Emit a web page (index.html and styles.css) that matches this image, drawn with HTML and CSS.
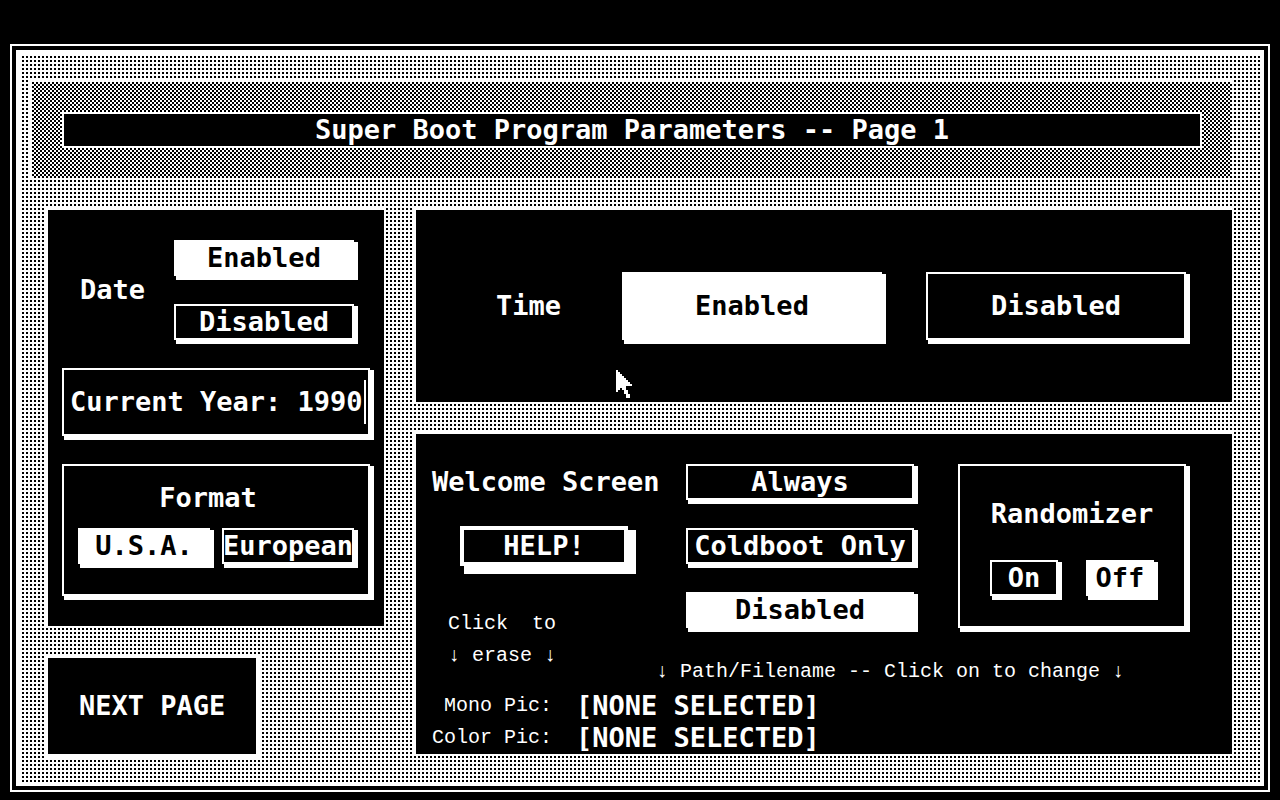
FILE: index.html
```html
<!DOCTYPE html>
<html lang="en">
<head>
<meta charset="utf-8">
<title>Super Boot Program Parameters</title>
<meta name="viewport" content="width=device-width, initial-scale=1">
<link rel="stylesheet" href="styles.css">
</head>
<body>
<main class="window">
  <form class="desk">
    <header class="banner">
      <h1 class="banner-title">Super Boot Program Parameters -- Page 1</h1>
    </header>
    <div class="columns">
      <div class="column">
        <section class="panel date-panel">
          <div class="date-row" role="radiogroup" aria-labelledby="date-label">
            <span class="date-label" id="date-label">Date</span>
            <div class="stack">
              <label class="box option"><input type="radio" name="date" checked><span>Enabled</span></label>
              <label class="box option"><input type="radio" name="date"><span>Disabled</span></label>
            </div>
          </div>
          <div class="box year-box">
            <label for="year">Current Year:&nbsp;</label>
            <input class="year-input" id="year" type="text" value="1990" maxlength="4">
            <span class="caret"></span>
          </div>
          <div class="box format-box" role="radiogroup" aria-labelledby="format-label">
            <span class="format-label" id="format-label">Format</span>
            <div class="format-row">
              <label class="box option"><input type="radio" name="format" checked><span>U.S.A.</span></label>
              <label class="box option"><input type="radio" name="format"><span>European</span></label>
            </div>
          </div>
        </section>
        <button class="next" type="button">NEXT PAGE</button>
      </div>
      <div class="column">
        <section class="panel time-panel" role="radiogroup" aria-labelledby="time-label">
          <span class="time-label" id="time-label">Time</span>
          <div class="time-row">
            <label class="box option tall"><input type="radio" name="time" checked><span>Enabled</span></label>
            <label class="box option tall"><input type="radio" name="time"><span>Disabled</span></label>
          </div>
          <svg class="pointer" viewBox="0 0 8 14" width="16" height="28" shape-rendering="crispEdges" aria-hidden="true"><path fill="#fff" d="M0 0h1v1h1v1h1v1h1v1h1v1h1v1h1v1h1v1H5v2h1v2h1v2H5v-2H4v-2H3V9H2v1H1v1H0z"/></svg>
        </section>
        <section class="panel welcome-panel">
          <div class="welcome-top">
            <div class="welcome-side">
              <span class="welcome-label" id="welcome-label">Welcome Screen</span>
              <button class="help" type="button">HELP!</button>
              <p class="small erase">Click&nbsp; to<br>↓ erase ↓</p>
            </div>
            <div class="welcome-main">
              <div class="welcome-options">
                <div class="stack" role="radiogroup" aria-labelledby="welcome-label">
                  <label class="box option"><input type="radio" name="welcome"><span>Always</span></label>
                  <label class="box option"><input type="radio" name="welcome"><span>Coldboot Only</span></label>
                  <label class="box option"><input type="radio" name="welcome" checked><span>Disabled</span></label>
                </div>
                <div class="box random-box" role="radiogroup" aria-labelledby="random-label">
                  <span id="random-label">Randomizer</span>
                  <div class="random-row">
                    <label class="box option"><input type="radio" name="random"><span>On</span></label>
                    <label class="box option"><input type="radio" name="random" checked><span>Off</span></label>
                  </div>
                </div>
              </div>
              <p class="small">↓ Path/Filename -- Click on to change ↓</p>
            </div>
          </div>
          <table class="files">
            <tr><th class="small" scope="row">Mono Pic:</th><td><button class="file" type="button">[NONE SELECTED]</button></td></tr>
            <tr><th class="small" scope="row">Color Pic:</th><td><button class="file" type="button">[NONE SELECTED]</button></td></tr>
          </table>
        </section>
      </div>
    </div>
  </form>
</main>
</body>
</html>
```
FILE: styles.css
```css
* {
  box-sizing: border-box;
}

body {
  margin: 0;
  min-height: 100vh;
  padding: 44px 10px 8px;
  background: #000;
  color: #fff;
  font: bold 27px/32px "DejaVu Sans Mono", monospace;
}

button,
input {
  margin: 0;
  padding: 0;
  border: 0;
  background: none;
  color: inherit;
  font: inherit;
}

p,
h1 {
  margin: 0;
  font: inherit;
}

.window {
  padding: 4px;
  border: 2px solid #fff;
}

/* 4px tile with one 2px black dot in its lower right corner */
.desk {
  padding: 28px;
  border: 4px solid #fff;
  background: conic-gradient(#fff 25%, #000 0 50%, #fff 0) padding-box 0 0 / 4px 4px;
}

/* 2px checkerboard */
.banner {
  margin: 0 0 32px -16px;
  padding: 30px;
  outline: 2px solid #fff;
  background: conic-gradient(#fff 25%, #000 0 50%, #fff 0 75%, #000 0) 0 0 / 4px 4px;
}

.banner-title {
  border: 2px solid #fff;
  background: #000;
  text-align: center;
  white-space: nowrap;
}

.columns {
  display: grid;
  grid-template-columns: 7fr 17fr;
  gap: 32px;
}

.column {
  display: flex;
  flex-direction: column;
  gap: 32px;
  min-width: 0;
}

.panel {
  position: relative;
  background: #000;
  outline: 2px solid #fff;
}

.box {
  border: 2px solid #fff;
  box-shadow: 4px 2px #fff, 2px 4px #fff, 4px 4px #fff;
  background: #000;
  white-space: nowrap;
}

.option {
  position: relative;
  display: flex;
  flex: 1 1 0;
  align-items: center;
  justify-content: center;
  min-width: 0;
}

.option input {
  position: absolute;
  inset: 0;
  appearance: none;
}

.option:has(input:checked) {
  background: #fff;
  color: #000;
}

.option span {
  position: relative;
  pointer-events: none;
}

.tall {
  padding: 16px 0;
}

.stack {
  display: flex;
  flex: 1 1 0;
  flex-direction: column;
  gap: 28px;
}

.date-panel {
  display: flex;
  flex-direction: column;
  gap: 28px;
  padding: 30px 14px;
}

.date-row {
  display: flex;
  align-items: center;
  gap: 30px;
  padding: 0 16px 0 18px;
}

.date-label {
  width: 64px;
}

.year-box {
  display: flex;
  align-items: center;
  padding: 10px 0 10px 6px;
}

.year-input {
  width: 66px;
  outline: 0;
}

.caret {
  flex: none;
  width: 2px;
  height: 44px;
  background: #fff;
}

.format-box {
  padding: 16px 14px 30px;
}

.format-label {
  display: block;
  padding: 0 16px 14px 0;
  text-align: center;
}

.format-row {
  display: flex;
  gap: 12px;
}

.next {
  align-self: flex-start;
  padding: 32px 31px;
  background: #000;
  outline: 4px solid #fff;
  white-space: nowrap;
}

.time-panel {
  display: flex;
  align-items: center;
  padding: 62px 46px 62px 80px;
}

.time-label {
  width: 64px;
  margin-right: 62px;
}

.time-row {
  display: flex;
  flex: 1;
  gap: 44px;
}

.pointer {
  position: absolute;
  left: 200px;
  top: 160px;
}

.welcome-panel {
  padding: 30px 46px 0 16px;
}

.welcome-top {
  display: flex;
}

.welcome-side {
  display: flex;
  flex-direction: column;
  width: 224px;
}

.welcome-label {
  padding: 2px 0;
  white-space: nowrap;
}

.help {
  width: 168px;
  margin: 26px 28px 42px;
  border: 4px solid #fff;
  box-shadow: 8px 4px #fff, 4px 8px #fff, 8px 8px #fff;
}

.small {
  font: 20px/32px "Liberation Mono", monospace;
  white-space: nowrap;
}

.erase {
  padding-left: 16px;
}

.welcome-main {
  flex: 1;
}

.welcome-options {
  display: grid;
  grid-template-columns: 1fr 1fr;
  gap: 44px;
  padding: 0 0 28px 30px;
}

.random-box {
  padding: 32px 30px 30px;
  text-align: center;
}

.random-row {
  display: flex;
  gap: 28px;
  margin-top: 30px;
}

.files {
  margin-top: 2px;
  border-collapse: collapse;
}

.files th {
  width: 120px;
  padding: 0;
  text-align: right;
}

.files td {
  padding: 0 0 0 24px;
}

.file {
  display: block;
}
```
